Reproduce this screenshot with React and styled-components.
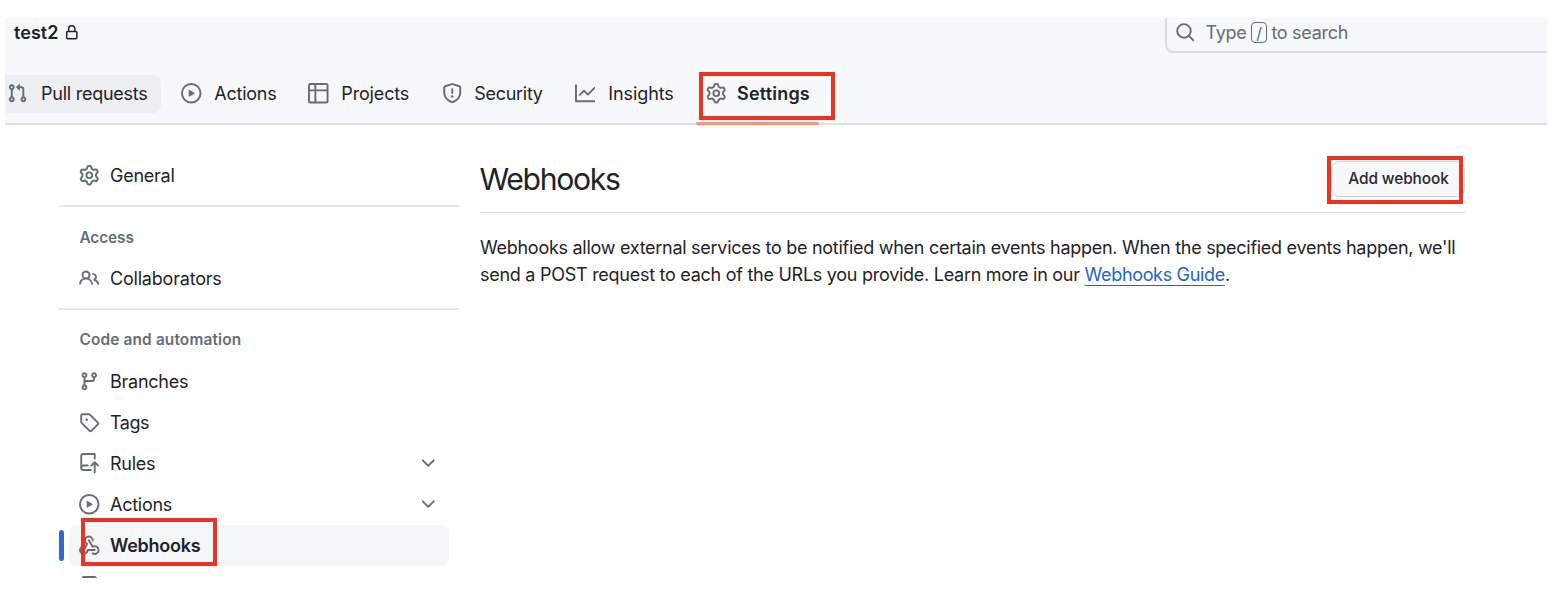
import React from "react";
import styled, { createGlobalStyle, css } from "styled-components";

const GlobalStyle = createGlobalStyle`
  *, *::before, *::after { box-sizing: border-box; }
  body {
    margin: 0;
    background: #ffffff;
    color: #1f2328;
    font-family: Inter, "Liberation Sans", sans-serif;
    font-size: 18px;
    overflow: hidden;
  }
`;

const PATHS = {
  pull: "M1.5 3.25a2.25 2.25 0 1 1 3 2.122v5.256a2.251 2.251 0 1 1-1.5 0V5.372A2.25 2.25 0 0 1 1.5 3.25Zm5.677-.177L9.573.677A.25.25 0 0 1 10 .854V2.5h1A2.5 2.5 0 0 1 13.5 5v5.628a2.251 2.251 0 1 1-1.5 0V5a1 1 0 0 0-1-1h-1v1.646a.25.25 0 0 1-.427.177L7.177 3.427a.25.25 0 0 1 0-.354ZM3.75 2.5a.75.75 0 1 0 0 1.5.75.75 0 0 0 0-1.5Zm0 9.5a.75.75 0 1 0 0 1.5.75.75 0 0 0 0-1.5Zm8.25.75a.75.75 0 1 0 1.5 0 .75.75 0 0 0-1.5 0Z",
  play: "M8 0a8 8 0 1 1 0 16A8 8 0 0 1 8 0ZM1.5 8a6.5 6.5 0 1 0 13 0 6.5 6.5 0 0 0-13 0Zm4.879-2.773 4.264 2.559a.25.25 0 0 1 0 .428l-4.264 2.559A.25.25 0 0 1 6 10.559V5.442a.25.25 0 0 1 .379-.215Z",
  table: "M0 1.75C0 .784.784 0 1.75 0h12.5C15.216 0 16 .784 16 1.75v12.5A1.75 1.75 0 0 1 14.25 16H1.75A1.75 1.75 0 0 1 0 14.25ZM6.5 6.5v8h7.75a.25.25 0 0 0 .25-.25V6.5Zm8-1.5V1.75a.25.25 0 0 0-.25-.25H6.5V5Zm-13 1.5v7.75c0 .138.112.25.25.25H5v-8ZM5 5V1.5H1.75a.25.25 0 0 0-.25.25V5Z",
  shield: "M7.467.133a1.748 1.748 0 0 1 1.066 0l5.25 1.68A1.75 1.75 0 0 1 15 3.48V7c0 1.566-.32 3.182-1.303 4.682-.983 1.498-2.585 2.813-5.032 3.855a1.697 1.697 0 0 1-1.33 0c-2.447-1.042-4.049-2.357-5.032-3.855C1.32 10.182 1 8.566 1 7V3.48a1.75 1.75 0 0 1 1.217-1.667Zm.61 1.429a.25.25 0 0 0-.153 0l-5.25 1.68a.25.25 0 0 0-.174.238V7c0 1.358.275 2.666 1.057 3.86.784 1.194 2.121 2.34 4.366 3.297a.196.196 0 0 0 .154 0c2.245-.956 3.582-2.104 4.366-3.298C13.225 9.666 13.5 8.36 13.5 7V3.48a.251.251 0 0 0-.174-.237l-5.25-1.68ZM8.75 4.75v3a.75.75 0 0 1-1.5 0v-3a.75.75 0 0 1 1.5 0ZM9 10.5a1 1 0 1 1-2 0 1 1 0 0 1 2 0Z",
  graph: "M1.5 1.75V13.5h13.75a.75.75 0 0 1 0 1.5H.75a.75.75 0 0 1-.75-.75V1.75a.75.75 0 0 1 1.5 0Zm14.28 2.53-5.25 5.25a.75.75 0 0 1-1.06 0L7 7.06 4.28 9.78a.751.751 0 0 1-1.042-.018.751.751 0 0 1-.018-1.042l3.25-3.25a.75.75 0 0 1 1.06 0L10 7.94l4.72-4.72a.751.751 0 0 1 1.042.018.751.751 0 0 1 .018 1.042Z",
  gear: "M8 0a8.2 8.2 0 0 1 .701.031C9.444.095 9.99.645 10.16 1.29l.288 1.107c.018.066.079.158.212.224.231.114.454.243.668.386.123.082.233.09.299.071l1.103-.303c.644-.176 1.392.021 1.82.63.27.385.506.792.704 1.218.315.675.111 1.422-.364 1.891l-.814.806c-.049.048-.098.147-.088.294.016.257.016.515 0 .772-.01.147.038.246.088.294l.814.806c.475.469.679 1.216.364 1.891a7.977 7.977 0 0 1-.704 1.217c-.428.61-1.176.807-1.82.63l-1.102-.302c-.067-.019-.177-.011-.3.071a5.909 5.909 0 0 1-.668.386c-.133.066-.194.158-.211.224l-.29 1.106c-.168.646-.715 1.196-1.458 1.26a8.006 8.006 0 0 1-1.402 0c-.743-.064-1.289-.614-1.458-1.26l-.289-1.106c-.018-.066-.079-.158-.212-.224a5.738 5.738 0 0 1-.668-.386c-.123-.082-.233-.09-.299-.071l-1.103.303c-.644.176-1.392-.021-1.82-.63a8.12 8.12 0 0 1-.704-1.218c-.315-.675-.111-1.422.363-1.891l.815-.806c.05-.048.098-.147.088-.294a6.214 6.214 0 0 1 0-.772c.01-.147-.038-.246-.088-.294l-.815-.806C.635 6.045.431 5.298.746 4.623a7.92 7.92 0 0 1 .704-1.217c.428-.61 1.176-.807 1.82-.63l1.102.302c.067.019.177.011.3-.071.214-.143.437-.272.668-.386.133-.066.194-.158.211-.224l.29-1.106C6.009.645 6.556.095 7.299.03 7.53.01 7.764 0 8 0Zm-.571 1.525c-.036.003-.108.036-.137.146l-.289 1.105c-.147.561-.549.967-.998 1.189-.173.086-.34.183-.5.29-.417.278-.97.423-1.529.27l-1.103-.303c-.109-.03-.175.016-.195.045-.22.312-.412.644-.573.99-.014.031-.021.11.059.19l.815.806c.411.406.562.957.53 1.456a4.709 4.709 0 0 0 0 .582c.032.499-.119 1.05-.53 1.456l-.815.806c-.081.08-.073.159-.059.19.162.346.353.677.573.989.02.03.085.076.195.046l1.102-.303c.56-.153 1.113-.008 1.53.27.161.107.328.204.501.29.447.222.85.629.997 1.189l.289 1.105c.029.109.101.143.137.146a6.6 6.6 0 0 0 1.142 0c.036-.003.108-.036.137-.146l.289-1.105c.147-.561.549-.967.998-1.189.173-.086.34-.183.5-.29.417-.278.97-.423 1.529-.27l1.103.303c.109.029.175-.016.195-.045.22-.313.411-.644.573-.99.014-.031.021-.11-.059-.19l-.815-.806c-.411-.406-.562-.957-.53-1.456a4.709 4.709 0 0 0 0-.582c-.032-.499.119-1.05.53-1.456l.815-.806c.081-.08.073-.159.059-.19a6.464 6.464 0 0 0-.573-.989c-.02-.03-.085-.076-.195-.046l-1.102.303c-.56.153-1.113.008-1.53-.27a4.44 4.44 0 0 0-.501-.29c-.447-.222-.85-.629-.997-1.189l-.289-1.105c-.029-.11-.101-.143-.137-.146a6.6 6.6 0 0 0-1.142 0ZM11 8a3 3 0 1 1-6 0 3 3 0 0 1 6 0ZM9.5 8a1.5 1.5 0 1 0-3.001.001A1.5 1.5 0 0 0 9.5 8Z",
  people: "M2 5.5a3.5 3.5 0 1 1 5.898 2.549 5.508 5.508 0 0 1 3.034 4.084.75.75 0 1 1-1.482.235 4 4 0 0 0-7.9 0 .75.75 0 0 1-1.482-.236A5.507 5.507 0 0 1 3.102 8.05 3.493 3.493 0 0 1 2 5.5ZM11 4a3.001 3.001 0 0 1 2.22 5.018 5.01 5.01 0 0 1 2.56 3.012.749.749 0 0 1-.885.954.752.752 0 0 1-.549-.514 3.507 3.507 0 0 0-2.522-2.372.75.75 0 0 1-.574-.73v-.352a.75.75 0 0 1 .416-.672A1.5 1.5 0 0 0 11 5.5.75.75 0 0 1 11 4Zm-5.5-.5a2 2 0 1 0-.001 3.999A2 2 0 0 0 5.5 3.5Z",
  branch: "M9.5 3.25a2.25 2.25 0 1 1 3 2.122V6A2.5 2.5 0 0 1 10 8.5H6a1 1 0 0 0-1 1v1.128a2.251 2.251 0 1 1-1.5 0V5.372a2.25 2.25 0 1 1 1.5 0v1.836A2.493 2.493 0 0 1 6 7h4a1 1 0 0 0 1-1v-.628A2.25 2.25 0 0 1 9.5 3.25Zm-6 0a.75.75 0 1 0 1.5 0 .75.75 0 0 0-1.5 0Zm8.25-.75a.75.75 0 1 0 0 1.5.75.75 0 0 0 0-1.5ZM4.25 12a.75.75 0 1 0 0 1.5.75.75 0 0 0 0-1.5Z",
  tag: "M1 7.775V2.75C1 1.784 1.784 1 2.75 1h5.025c.464 0 .91.184 1.238.513l6.25 6.25a1.75 1.75 0 0 1 0 2.474l-5.026 5.026a1.75 1.75 0 0 1-2.474 0l-6.25-6.25A1.752 1.752 0 0 1 1 7.775Zm1.5 0c0 .066.026.13.073.177l6.25 6.25a.25.25 0 0 0 .354 0l5.025-5.025a.25.25 0 0 0 0-.354l-6.25-6.25a.25.25 0 0 0-.177-.073H2.75a.25.25 0 0 0-.25.25ZM6 5a1 1 0 1 1 0 2 1 1 0 0 1 0-2Z",
  push: "M1 2.5A2.5 2.5 0 0 1 3.5 0h8.75a.75.75 0 0 1 .75.75v3.5a.75.75 0 0 1-1.5 0V1.5h-8a1 1 0 0 0-1 1v6.708A2.493 2.493 0 0 1 3.5 9h3.25a.75.75 0 0 1 0 1.5H3.5a1 1 0 0 0 0 2h5.75a.75.75 0 0 1 0 1.5H3.5A2.5 2.5 0 0 1 1 11.5Zm13.23 7.79h-.001l-1.224-1.224v6.184a.75.75 0 0 1-1.5 0V9.066L10.28 10.29a.75.75 0 0 1-1.06-1.061l2.505-2.504a.75.75 0 0 1 1.06 0L15.29 9.23a.751.751 0 0 1-.018 1.042.751.751 0 0 1-1.042.018Z",
  webhook: "M5.5 4.25a2.25 2.25 0 0 1 4.5 0 .75.75 0 0 0 1.5 0 3.75 3.75 0 1 0-6.14 2.889l-2.272 4.258a.75.75 0 0 0 1.324.706L7 7.25a.75.75 0 0 0-.309-1.015A2.25 2.25 0 0 1 5.5 4.25ZM7.364 3.607a.75.75 0 0 1 1.03.257l2.608 4.349a3.75 3.75 0 1 1-.628 6.785.75.75 0 0 1 .752-1.299 2.25 2.25 0 1 0-.033-3.88.75.75 0 0 1-1.03-.256L7.107 4.636a.75.75 0 0 1 .257-1.03ZM2.9 8.776A.75.75 0 0 1 2.625 9.8 2.25 2.25 0 1 0 6 11.75a.75.75 0 0 1 .75-.751h5.5a.75.75 0 0 1 0 1.5H7.425a3.751 3.751 0 1 1-5.55-3.998.75.75 0 0 1 1.024.274Z",
  server: "M3.75 0h8.5C13.216 0 14 .784 14 1.75v12.5A1.75 1.75 0 0 1 12.25 16h-8.5A1.75 1.75 0 0 1 2 14.25V1.75C2 .784 2.784 0 3.75 0ZM3.5 1.75v12.5c0 .138.112.25.25.25h8.5a.25.25 0 0 0 .25-.25V1.75a.25.25 0 0 0-.25-.25h-8.5a.25.25 0 0 0-.25.25Z",
  lock: "M4 4a4 4 0 0 1 8 0v2h.25c.966 0 1.75.784 1.75 1.75v5.5A1.75 1.75 0 0 1 12.25 15h-8.5A1.75 1.75 0 0 1 2 13.25v-5.5C2 6.784 2.784 6 3.75 6H4Zm8.25 3.5h-8.5a.25.25 0 0 0-.25.25v5.5c0 .138.112.25.25.25h8.5a.25.25 0 0 0 .25-.25v-5.5a.25.25 0 0 0-.25-.25ZM10.5 6V4a2.5 2.5 0 1 0-5 0v2Z",
  search: "M10.68 11.74a6 6 0 0 1-7.922-8.982 6 6 0 0 1 8.982 7.922l3.04 3.04a.749.749 0 0 1-.326 1.275.749.749 0 0 1-.734-.215ZM11.5 7a4.499 4.499 0 1 0-8.997 0A4.499 4.499 0 0 0 11.5 7Z",
  chevron: "M12.78 5.22a.749.749 0 0 1 0 1.06l-4.25 4.25a.749.749 0 0 1-1.06 0L3.22 6.28a.749.749 0 1 1 1.06-1.06L8 8.939l3.72-3.719a.749.749 0 0 1 1.06 0Z",
};

const Glyph = styled.svg`
  display: block;
  flex: none;
  fill: ${(p) => p.$color || "#656d76"};
`;

function Icon({ name, size = 20.5, color }) {
  return (
    <Glyph $color={color} width={size} height={size} viewBox="0 0 16 16" aria-hidden="true">
      <path d={PATHS[name]} />
    </Glyph>
  );
}

const Page = styled.div`
  width: 1550px;
  height: 596px;
  padding: 18px 3px 18px 5px;
  overflow: hidden;
`;

const Header = styled.header`
  height: 107px;
  background: #f6f8fa;
  border-bottom: 2px solid #dae0e5;
`;

const TopBar = styled.div`
  display: flex;
  justify-content: space-between;
  height: 56.5px;
  padding-left: 9px;
`;

const RepoName = styled.div`
  display: flex;
  align-items: center;
  gap: 5.5px;
  height: 28.5px;
  font-weight: 600;
  letter-spacing: 0.05px;
`;

const SearchBox = styled.div`
  display: flex;
  align-items: center;
  width: 382px;
  height: 35px;
  padding: 0 0 4px 8px;
  border: solid #d9dce4;
  border-width: 0 0 2px 2px;
  border-bottom-left-radius: 8px;
  color: #656d76;
`;

const SearchHint = styled.span`
  display: flex;
  align-items: center;
  gap: 4.5px;
  margin-left: 10px;
  letter-spacing: -0.3px;
`;

const SlashKey = styled.kbd`
  display: flex;
  align-items: center;
  justify-content: center;
  width: 16px;
  height: 21px;
  border: 1.3px solid #656d76;
  border-radius: 4px;
  font: 16px/1 Inter, sans-serif;
`;

const Tabs = styled.nav`
  display: flex;
`;

const Tab = styled.a`
  position: relative;
  display: flex;
  align-items: center;
  gap: ${(p) => p.$gap}px;
  width: ${(p) => p.$width}px;
  height: 38px;
  white-space: nowrap;
  letter-spacing: ${(p) => p.$track}px;
  ${(p) => p.$hover && css`
    padding-left: 2px;
    background: #eeeff2;
    border-radius: 0 8px 8px 0;
  `}
  ${(p) => p.$active && css`
    font-weight: 600;
    &::after {
      content: "";
      position: absolute;
      left: -10px;
      bottom: -12px;
      width: 123px;
      height: 3px;
      border-radius: 2px;
      background: #f4937d;
    }
  `}
`;

const TabGap = styled.span`
  width: 20.3px;
`;

const Highlight = styled.span`
  position: absolute;
  left: ${(p) => p.$left}px;
  top: ${(p) => p.$top}px;
  width: 136px;
  height: ${(p) => p.$height || 48}px;
  border: 4px solid #ec3323;
  pointer-events: none;
`;

const Body = styled.div`
  display: flex;
  gap: 21px;
  height: 453px;
  padding: 30px 0 0 54px;
  overflow: hidden;
`;

const Sidebar = styled.aside`
  flex: none;
  width: 400px;
`;

const Divider = styled.hr`
  height: 2px;
  margin: 9px 0 9.5px;
  border: 0;
  background: #e3e7eb;
`;

const GroupTitle = styled.h3`
  margin: 0;
  padding-left: 20.5px;
  color: #656d76;
  font-size: 15.4px;
  font-weight: 600;
  line-height: 41.4px;
  letter-spacing: ${(p) => p.$track}px;
`;

const Row = styled.a`
  position: relative;
  display: flex;
  align-items: center;
  gap: 10.2px;
  height: 41px;
  margin: 0 10px;
  padding: 0 10.8px 0 10.3px;
  border-radius: 8px;
  letter-spacing: ${(p) => p.$track}px;
  ${(p) => p.$active && css`
    background: #f5f6f8;
    font-weight: 600;
    &::before {
      content: "";
      position: absolute;
      left: -10px;
      top: 5px;
      width: 5px;
      height: 31px;
      border-radius: 3px;
      background: #2f69d9;
    }
  `}
`;

const RowLabel = styled.span`
  flex: 1;
`;

const Main = styled.main`
  width: 985px;
`;

const Heading = styled.div`
  display: flex;
  justify-content: space-between;
  align-items: flex-start;
  height: 58px;
  border-bottom: 1.3px solid #d8dee4;
`;

const Title = styled.h2`
  margin: 0 0 0 -0.5px;
  font-size: 30.2px;
  font-weight: 400;
  line-height: 48px;
  letter-spacing: -1.35px;
`;

const AddButton = styled.button`
  position: relative;
  width: 134px;
  height: 36px;
  margin-top: 6px;
  padding: 0 0 0 1px;
  border: 1.3px solid #d0d5da;
  border-radius: 8px;
  background: #f6f8fa;
  color: #24292f;
  font: 500 15.4px/32px Inter, sans-serif;
  letter-spacing: -0.1px;
  white-space: nowrap;
`;

const Intro = styled.p`
  margin: 21px 0 0;
  line-height: 27px;
  white-space: nowrap;
`;

const Line = styled.span`
  display: block;
  letter-spacing: ${(p) => p.$track}px;
`;

const Link = styled.a`
  color: #2463d2;
  letter-spacing: -0.33px;
  text-decoration: underline;
  text-decoration-thickness: 1.3px;
  text-underline-offset: 4px;
`;

const TABS = [
  { icon: "play", label: "Actions", width: 127, gap: 12.5, track: -0.25 },
  { icon: "table", label: "Projects", width: 133.5, gap: 12.5, track: -0.15 },
  { icon: "shield", label: "Security", width: 133, gap: 12, track: -0.3 },
  { icon: "graph", label: "Insights", width: 131.5, gap: 13, track: -0.1 },
];

export default function App() {
  return (
    <>
      <GlobalStyle />
      <Page>
        <Header>
          <TopBar>
            <RepoName>
              test2
              <Icon name="lock" size={15.5} color="#1f2328" />
            </RepoName>
            <SearchBox>
              <Icon name="search" />
              <SearchHint>
                Type <SlashKey>/</SlashKey> to search
              </SearchHint>
            </SearchBox>
          </TopBar>
          <Tabs>
            <Tab $hover $width={156} $gap={13.5} $track={-0.25}>
              <Icon name="pull" />
              Pull requests
            </Tab>
            <TabGap />
            {TABS.map((t) => (
              <Tab key={t.label} $width={t.width} $gap={t.gap} $track={t.track}>
                <Icon name={t.icon} />
                {t.label}
              </Tab>
            ))}
            <Tab $active $width={113} $gap={10.2} $track={0.2}>
              <Icon name="gear" />
              Settings
              <Highlight $left={-7.3} $top={-2.5} $height={47.5} />
            </Tab>
          </Tabs>
        </Header>
        <Body>
          <Sidebar>
            <Row $track={-0.25}><Icon name="gear" />General</Row>
            <Divider />
            <GroupTitle $track={-0.1}>Access</GroupTitle>
            <Row $track={-0.2}><Icon name="people" />Collaborators</Row>
            <Divider />
            <GroupTitle $track={0.15}>Code and automation</GroupTitle>
            <Row $track={-0.25}><Icon name="branch" />Branches</Row>
            <Row $track={-0.5}><Icon name="tag" />Tags</Row>
            <Row $track={-0.25}>
              <Icon name="push" />
              <RowLabel>Rules</RowLabel>
              <Icon name="chevron" />
            </Row>
            <Row $track={-0.25}>
              <Icon name="play" />
              <RowLabel>Actions</RowLabel>
              <Icon name="chevron" />
            </Row>
            <Row $active $track={-0.25}>
              <Icon name="webhook" />
              Webhooks
              <Highlight $left={12} $top={-7} />
            </Row>
            <Row><Icon name="server" /></Row>
          </Sidebar>
          <Main>
            <Heading>
              <Title>Webhooks</Title>
              <AddButton>
                Add webhook
                <Highlight $left={-5.3} $top={-6} />
              </AddButton>
            </Heading>
            <Intro>
              <Line $track={-0.278}>
                Webhooks allow external services to be notified when certain events happen. When the specified events happen, we'll
              </Line>
              <Line $track={-0.27}>
                send a POST request to each of the URLs you provide. Learn more in our <Link>Webhooks Guide</Link>.
              </Line>
            </Intro>
          </Main>
        </Body>
      </Page>
    </>
  );
}
